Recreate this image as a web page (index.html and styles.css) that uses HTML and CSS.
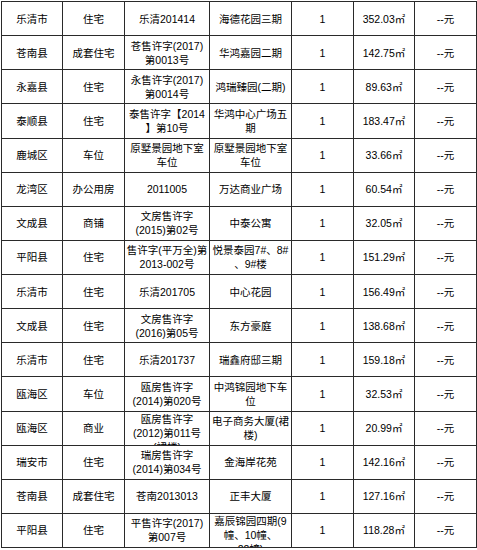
FILE: index.html
```html
<!DOCTYPE html>
<html lang="zh">
<head>
<meta charset="utf-8">
<link rel="stylesheet" href="styles.css">
</head>
<body>
<table class="grid">
<colgroup>
<col class="c1"><col class="c2"><col class="c3"><col class="c4"><col class="c5"><col class="c6"><col class="c7">
</colgroup>
<tbody>
<tr><td><div class="cell"><span>乐清市</span></div></td><td><div class="cell"><span>住宅</span></div></td><td><div class="cell"><span>乐清201414</span></div></td><td><div class="cell"><span>海德花园三期</span></div></td><td><div class="cell"><span>1</span></div></td><td><div class="cell"><span>352.03㎡</span></div></td><td><div class="cell"><span>--元</span></div></td></tr>
<tr><td><div class="cell"><span>苍南县</span></div></td><td><div class="cell"><span>成套住宅</span></div></td><td><div class="cell"><span>苍售许字(2017)<br>第0013号</span></div></td><td><div class="cell"><span>华鸿嘉园二期</span></div></td><td><div class="cell"><span>1</span></div></td><td><div class="cell"><span>142.75㎡</span></div></td><td><div class="cell"><span>--元</span></div></td></tr>
<tr><td><div class="cell"><span>永嘉县</span></div></td><td><div class="cell"><span>住宅</span></div></td><td><div class="cell"><span>永售许字(2017)<br>第0014号</span></div></td><td><div class="cell"><span>鸿瑞臻园(二期)</span></div></td><td><div class="cell"><span>1</span></div></td><td><div class="cell"><span>89.63㎡</span></div></td><td><div class="cell"><span>--元</span></div></td></tr>
<tr><td><div class="cell"><span>泰顺县</span></div></td><td><div class="cell"><span>住宅</span></div></td><td><div class="cell"><span>泰售许字【2014<br>】第10号</span></div></td><td><div class="cell"><span>华鸿中心广场五<br>期</span></div></td><td><div class="cell"><span>1</span></div></td><td><div class="cell"><span>183.47㎡</span></div></td><td><div class="cell"><span>--元</span></div></td></tr>
<tr><td><div class="cell"><span>鹿城区</span></div></td><td><div class="cell"><span>车位</span></div></td><td><div class="cell"><span>原墅景园地下室<br>车位</span></div></td><td><div class="cell"><span>原墅景园地下室<br>车位</span></div></td><td><div class="cell"><span>1</span></div></td><td><div class="cell"><span>33.66㎡</span></div></td><td><div class="cell"><span>--元</span></div></td></tr>
<tr><td><div class="cell"><span>龙湾区</span></div></td><td><div class="cell"><span>办公用房</span></div></td><td><div class="cell"><span>2011005</span></div></td><td><div class="cell"><span>万达商业广场</span></div></td><td><div class="cell"><span>1</span></div></td><td><div class="cell"><span>60.54㎡</span></div></td><td><div class="cell"><span>--元</span></div></td></tr>
<tr><td><div class="cell"><span>文成县</span></div></td><td><div class="cell"><span>商铺</span></div></td><td><div class="cell"><span>文房售许字<br>(2015)第02号</span></div></td><td><div class="cell"><span>中泰公寓</span></div></td><td><div class="cell"><span>1</span></div></td><td><div class="cell"><span>32.05㎡</span></div></td><td><div class="cell"><span>--元</span></div></td></tr>
<tr><td><div class="cell"><span>平阳县</span></div></td><td><div class="cell"><span>住宅</span></div></td><td><div class="cell"><span>售许字(平万全)第<br>2013-002号</span></div></td><td><div class="cell"><span>悦景泰园7#、8#<br>、9#楼</span></div></td><td><div class="cell"><span>1</span></div></td><td><div class="cell"><span>151.29㎡</span></div></td><td><div class="cell"><span>--元</span></div></td></tr>
<tr><td><div class="cell"><span>乐清市</span></div></td><td><div class="cell"><span>住宅</span></div></td><td><div class="cell"><span>乐清201705</span></div></td><td><div class="cell"><span>中心花园</span></div></td><td><div class="cell"><span>1</span></div></td><td><div class="cell"><span>156.49㎡</span></div></td><td><div class="cell"><span>--元</span></div></td></tr>
<tr><td><div class="cell"><span>文成县</span></div></td><td><div class="cell"><span>住宅</span></div></td><td><div class="cell"><span>文房售许字<br>(2016)第05号</span></div></td><td><div class="cell"><span>东方豪庭</span></div></td><td><div class="cell"><span>1</span></div></td><td><div class="cell"><span>138.68㎡</span></div></td><td><div class="cell"><span>--元</span></div></td></tr>
<tr><td><div class="cell"><span>乐清市</span></div></td><td><div class="cell"><span>住宅</span></div></td><td><div class="cell"><span>乐清201737</span></div></td><td><div class="cell"><span>瑞鑫府邸三期</span></div></td><td><div class="cell"><span>1</span></div></td><td><div class="cell"><span>159.18㎡</span></div></td><td><div class="cell"><span>--元</span></div></td></tr>
<tr><td><div class="cell"><span>瓯海区</span></div></td><td><div class="cell"><span>车位</span></div></td><td><div class="cell"><span>瓯房售许字<br>(2014)第020号</span></div></td><td><div class="cell"><span>中鸿锦园地下车<br>位</span></div></td><td><div class="cell"><span>1</span></div></td><td><div class="cell"><span>32.53㎡</span></div></td><td><div class="cell"><span>--元</span></div></td></tr>
<tr><td><div class="cell"><span>瓯海区</span></div></td><td><div class="cell"><span>商业</span></div></td><td><div class="cell"><span>瓯房售许字<br>(2012)第011号<br>(裙楼)</span></div></td><td><div class="cell"><span>电子商务大厦(裙<br>楼)</span></div></td><td><div class="cell"><span>1</span></div></td><td><div class="cell"><span>20.99㎡</span></div></td><td><div class="cell"><span>--元</span></div></td></tr>
<tr><td><div class="cell"><span>瑞安市</span></div></td><td><div class="cell"><span>住宅</span></div></td><td><div class="cell"><span>瑞房售许字<br>(2014)第034号</span></div></td><td><div class="cell"><span>金海岸花苑</span></div></td><td><div class="cell"><span>1</span></div></td><td><div class="cell"><span>142.16㎡</span></div></td><td><div class="cell"><span>--元</span></div></td></tr>
<tr><td><div class="cell"><span>苍南县</span></div></td><td><div class="cell"><span>成套住宅</span></div></td><td><div class="cell"><span>苍南2013013</span></div></td><td><div class="cell"><span>正丰大厦</span></div></td><td><div class="cell"><span>1</span></div></td><td><div class="cell"><span>127.16㎡</span></div></td><td><div class="cell"><span>--元</span></div></td></tr>
<tr><td><div class="cell"><span>平阳县</span></div></td><td><div class="cell"><span>住宅</span></div></td><td><div class="cell"><span>平售许字(2017)<br>第007号</span></div></td><td><div class="cell"><span>嘉辰锦园四期(9<br>幢、10幢、<br>22幢)</span></div></td><td><div class="cell"><span>1</span></div></td><td><div class="cell"><span>118.28㎡</span></div></td><td><div class="cell"><span>--元</span></div></td></tr>
</tbody>
</table>
</body>
</html>
```
FILE: styles.css
```css
html, body {
  margin: 0;
  padding: 0;
  background: #fff;
}
body {
  padding: 1px 0 0 1px;
  font-family: "Liberation Sans", "Noto Sans CJK SC", sans-serif;
  font-size: 10.5px;
  line-height: 14px;
  color: #000;
}
.grid {
  border-collapse: collapse;
  table-layout: fixed;
  width: 476px;
}
.c1 { width: 61px; }
.c2 { width: 62px; }
.c3 { width: 85px; }
.c4 { width: 82px; }
.c5 { width: 62px; }
.c6 { width: 61px; }
.c7 { width: 62px; }
.grid td {
  border: 1px solid #2a2a2a;
  padding: 0;
  vertical-align: top;
}
.cell {
  height: 33.125px;
  overflow: hidden;
  display: flex;
  flex-direction: column;
  text-align: center;
}
.cell span {
  margin: auto 0;
}
```
